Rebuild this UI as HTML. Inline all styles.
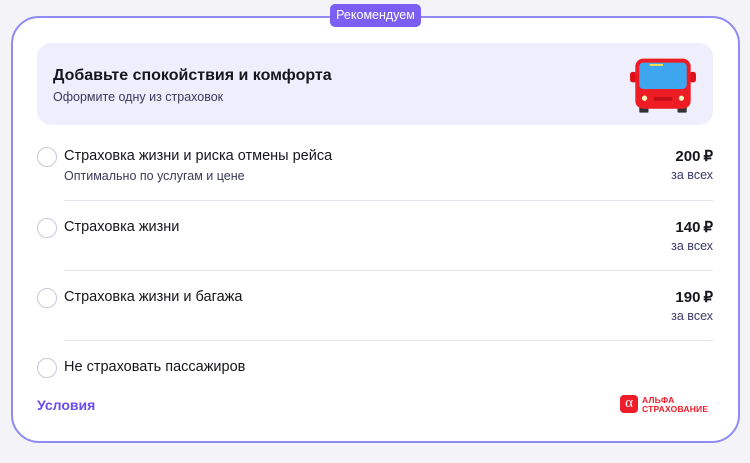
<!DOCTYPE html><html><head><meta charset="utf-8"><style>
*{margin:0;padding:0;box-sizing:border-box}
body{width:750px;height:463px;background:#f3f3f8;font-family:"Liberation Sans",sans-serif;position:relative;overflow:hidden;color:#16161c}
.card{position:absolute;left:11px;top:16px;width:729px;height:427px;border:2px solid #8f8bf6;border-radius:28px;background:#fff}
.badge{position:absolute;left:330px;top:4px;width:91px;height:23px;background:#7b5ff4;border-radius:5px;color:#fff;font-size:12.5px;line-height:23px;text-align:center}
.hero{position:absolute;left:37px;top:43px;width:676px;height:82px;background:#eeeefc;border-radius:14px}
.hero h1{position:absolute;left:16px;top:24px;font-size:16px;font-weight:bold}
.hero p{position:absolute;left:16px;top:47px;font-size:12.5px;color:#3a3a5a}
.r{position:absolute;left:37px;width:20px;height:20px;border:1.5px solid #c8c8d8;border-radius:50%}
.t{position:absolute;left:64px;font-size:14.5px}
.s{position:absolute;left:64px;font-size:12.5px;color:#3a3a5a}
.p{position:absolute;right:37px;font-size:15px;font-weight:bold;text-align:right}
.z{position:absolute;right:37px;font-size:12.5px;color:#3a3a6a}
.d{position:absolute;left:64px;width:649px;height:1px;background:#e4e4f0}
</style></head><body>
<div class="card"></div>
<div class="badge">Рекомендуем</div>
<div class="hero"><h1>Добавьте спокойствия и комфорта</h1><p>Оформите одну из страховок</p>
<svg style="position:absolute;left:592px;top:13px" width="68" height="58" viewBox="0 0 50 44">
<rect x="0" y="12" width="5" height="8" rx="2" fill="#e0101a"/><rect x="45" y="12" width="5" height="8" rx="2" fill="#e0101a"/>
<rect x="7" y="38" width="7" height="5" rx="1" fill="#333"/><rect x="36" y="38" width="7" height="5" rx="1" fill="#333"/>
<rect x="4" y="2" width="42" height="38" rx="6" fill="#ee1c24"/>
<rect x="7" y="5" width="36" height="20" rx="3" fill="#3ea6ee"/>
<rect x="15" y="6" width="10" height="1.5" fill="#ffe04a"/>
<circle cx="11" cy="32" r="2" fill="#fff6c0"/><circle cx="39" cy="32" r="2" fill="#fff6c0"/>
<rect x="18" y="31" width="14" height="3" rx="1" fill="#c40e18"/></svg></div>

<div class="r" style="top:147px"></div><div class="t" style="top:148px">Страховка жизни и риска отмены рейса</div>
<div class="s" style="top:169px">Оптимально по услугам и цене</div>
<div class="p" style="top:147px">200&#8201;₽</div><div class="z" style="top:168px">за всех</div>
<div class="d" style="top:200px"></div>

<div class="r" style="top:218px"></div><div class="t" style="top:219px">Страховка жизни</div>
<div class="p" style="top:218px">140&#8201;₽</div><div class="z" style="top:239px">за всех</div>
<div class="d" style="top:270px"></div>

<div class="r" style="top:288px"></div><div class="t" style="top:289px">Страховка жизни и багажа</div>
<div class="p" style="top:288px">190&#8201;₽</div><div class="z" style="top:309px">за всех</div>
<div class="d" style="top:340px"></div>

<div class="r" style="top:358px"></div><div class="t" style="top:359px">Не страховать пассажиров</div>

<div style="position:absolute;left:37px;top:397px;font-size:14px;font-weight:bold;color:#6a4cf0">Условия</div>
<div style="position:absolute;left:620px;top:395px;width:18px;height:18px;background:#ef1c2a;border-radius:4px;color:#fff;font-size:15px;line-height:17px;text-align:center;font-family:'Liberation Serif',serif">α</div>
<div style="position:absolute;left:642px;top:396px;font-size:8.5px;font-weight:bold;color:#ef1c2a;line-height:9px;letter-spacing:0.2px">АЛЬФА<br>СТРАХОВАНИЕ</div>
</body></html>
